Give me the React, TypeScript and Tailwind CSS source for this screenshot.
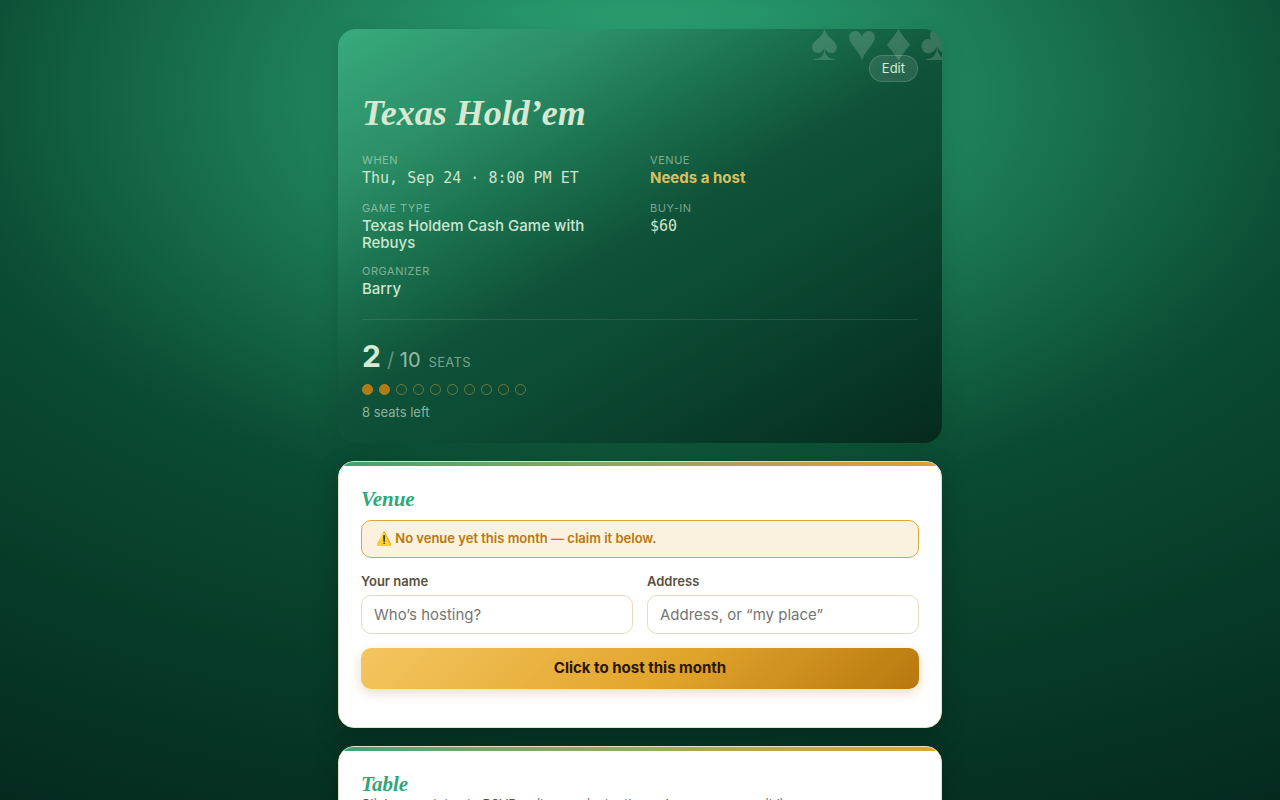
import type { ReactNode } from 'react';

const SEATS_TOTAL = 10;
const SEATS_TAKEN = 2;

type DetailProps = {
  label: string;
  children: ReactNode;
};

function Detail({ label, children }: DetailProps) {
  return (
    <div>
      <dt className="text-[11px] leading-4 tracking-wider text-[#d8ead9]/55 uppercase">{label}</dt>
      <dd className="mt-px text-[15px] leading-[17px] font-medium text-[#cfe5d0]">{children}</dd>
    </div>
  );
}

function Panel({ title, children }: { title: string; children: ReactNode }) {
  return (
    <section className="overflow-hidden rounded-2xl border border-[#e8dfc4] bg-white shadow-[0_8px_24px_rgba(0,20,12,0.3)]">
      <div className="h-1 bg-linear-to-r from-[#2fa877] to-[#e0a32e]" />
      <div className="px-[22px] pt-5 pb-[38px]">
        <h2 className="font-['Liberation_Serif',serif] text-[21px] leading-[26px] font-bold text-[#2fa877] italic">
          {title}
        </h2>
        {children}
      </div>
    </section>
  );
}

function Field({ id, label, placeholder }: { id: string; label: string; placeholder: string }) {
  return (
    <div>
      <label htmlFor={id} className="block text-[13px] leading-4 font-semibold text-[#5a5040]">
        {label}
      </label>
      <input
        id={id}
        type="text"
        placeholder={placeholder}
        className="mt-1.5 h-[39px] w-full rounded-[10px] border border-[#e5dac0] bg-white px-3 text-[15px] text-[#2b2418] placeholder:text-[#757575]"
      />
    </div>
  );
}

export default function App() {
  const seats = Array.from({ length: SEATS_TOTAL }, (_, i) => i < SEATS_TAKEN);

  return (
    <div className="h-screen overflow-hidden bg-[radial-gradient(ellipse_110%_104%_at_50%_12%,#2fae7a_0%,#0a4b33_50%,#042a1e_96%)] font-['Inter','Liberation_Sans',sans-serif]">
      <main className="mx-auto flex max-w-[604px] flex-col gap-[18px] pt-[29px]">
        <header className="relative overflow-hidden rounded-[18px] bg-[linear-gradient(150deg,#38ab7c_0%,#2c8f67_20%,#1b7350_34%,#0f5239_50%,#0b4933_65%,#052a1e_100%)] px-6 pt-[26px] pb-[21px] shadow-[0_8px_24px_rgba(0,20,12,0.15)]">
          <div
            aria-hidden="true"
            className="absolute -top-4 -right-3 flex gap-2 font-['Liberation_Serif',serif] text-[52px] leading-[60px] text-[#d8ead9]/20"
          >
            <span>♠</span>
            <span>♥</span>
            <span>♦</span>
            <span>♣</span>
          </div>
          <div className="flex justify-end">
            <button
              type="button"
              className="relative h-[27px] rounded-full border border-white/15 bg-white/10 px-3 text-[13px] text-[#d5ead6]"
            >
              Edit
            </button>
          </div>
          <h1 className="mt-2 font-['Liberation_Serif',serif] text-[36px] leading-[46px] font-bold text-[#d5e8d3] italic">
            Texas Hold’em
          </h1>
          <dl className="mt-4 grid grid-cols-2 gap-x-5 gap-y-3">
            <Detail label="When">
              <span className="block font-['DejaVu_Sans_Mono',monospace] leading-[19px]">
                Thu, Sep 24 · 8:00 PM ET
              </span>
            </Detail>
            <Detail label="Venue">
              <strong className="font-bold text-[#dcbf5e]">Needs a host</strong>
            </Detail>
            <Detail label="Game type">Texas Holdem Cash Game with Rebuys</Detail>
            <Detail label="Buy-in">
              <span className="block font-['DejaVu_Sans_Mono',monospace] leading-[19px]">$60</span>
            </Detail>
            <Detail label="Organizer">Barry</Detail>
          </dl>
          <div className="mt-[22px] border-t border-white/10 pt-[18px]">
            <p className="flex items-baseline text-[#d5ead6]">
              <span className="text-[30px] leading-9 font-bold">{SEATS_TAKEN}</span>
              <span className="ml-1.5 text-xl leading-9 text-[#d5ead6]/70">
                <span className="opacity-60">/</span> {SEATS_TOTAL}
              </span>
              <span className="ml-2 text-[13px] tracking-wide text-[#d5ead6]/55 uppercase">seats</span>
            </p>
            <div className="mt-1.5 flex gap-1.5" aria-hidden="true">
              {seats.map((taken, i) => (
                <span
                  key={i}
                  className={
                    taken
                      ? 'size-[11px] rounded-full border border-[#b9801a] bg-[#b07a14]'
                      : 'size-[11px] rounded-full border border-[#c9a03c]/50'
                  }
                />
              ))}
            </div>
            <p className="mt-[7px] text-[13px] leading-5 text-[#d5ead6]/65">
              {SEATS_TOTAL - SEATS_TAKEN} seats left
            </p>
          </div>
        </header>

        <Panel title="Venue">
          <p className="mt-2 flex h-[38px] items-center rounded-[10px] border border-[#d9a83c] bg-[#faf1de] px-3.5 text-[13px] font-semibold text-[#b8780f]">
            ⚠️ No venue yet this month — claim it below.
          </p>
          <form className="mt-[15px]" onSubmit={(e) => e.preventDefault()}>
            <div className="grid grid-cols-2 gap-3.5">
              <Field id="host-name" label="Your name" placeholder="Who’s hosting?" />
              <Field id="host-address" label="Address" placeholder="Address, or “my place”" />
            </div>
            <button
              type="submit"
              className="mt-3.5 h-[41px] w-full rounded-[10px] bg-[linear-gradient(135deg,#f4c660_0%,#e2a52c_55%,#b8780f_100%)] text-[15px] font-bold text-[#2a1604] shadow-[0_4px_12px_rgba(184,120,15,0.25)]"
            >
              Click to host this month
            </button>
          </form>
        </Panel>

        <Panel title="Table">
          <p className="text-[13px] leading-[14px] text-[#5a5040]">
            Click your status to RSVP — it saves instantly, and everyone sees it live.
          </p>
        </Panel>
      </main>
    </div>
  );
}
